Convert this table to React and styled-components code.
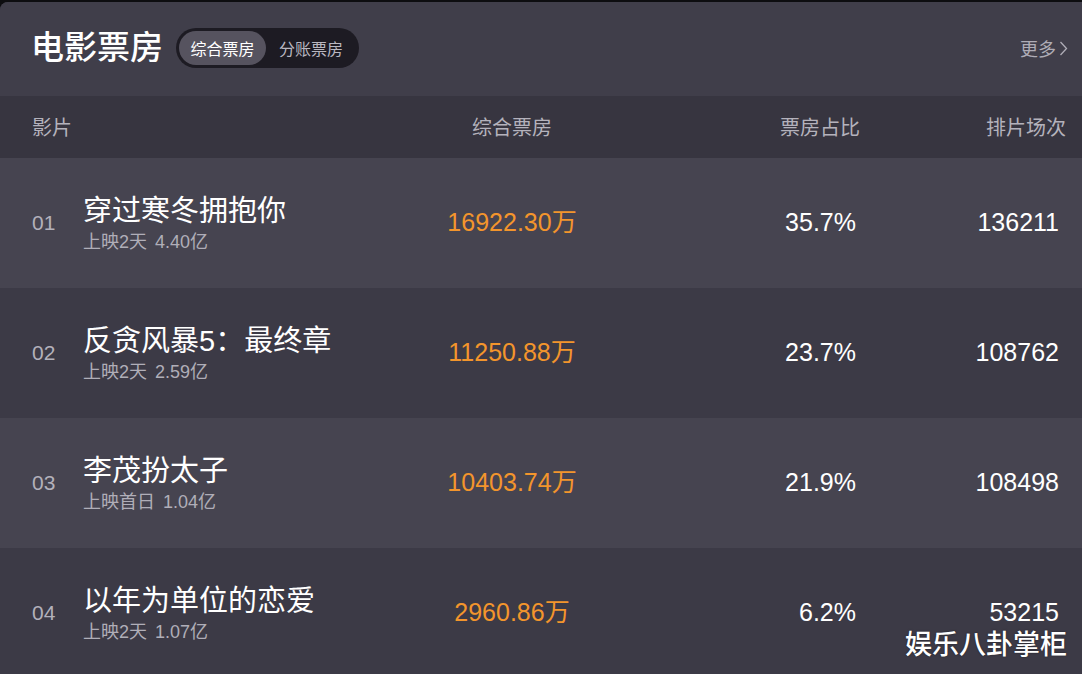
import React from "react";
import styled, { createGlobalStyle } from "styled-components";

const Global = createGlobalStyle`
  html, body { margin: 0; padding: 0; background: #0d0d10; }
  body { width: 1082px; height: 674px; overflow: hidden; font-family: "Liberation Sans", "Noto Sans CJK SC", sans-serif; }
`;

const Page = styled.div`
  position: relative;
  width: 1082px;
  height: 672px;
  margin-top: 2px;
  border-top-left-radius: 8px;
  overflow: hidden;
  background: #3c3a46;
`;

const TopBar = styled.div`
  height: 94px;
  display: flex;
  align-items: center;
  padding: 0 14px 0 31px;
  background: #403e4a;
`;

const Title = styled.h1`
  margin: 0 13px 2px 0;
  font-size: 33px;
  line-height: 40px;
  font-weight: 500;
  color: #fff;
`;

const Toggle = styled.div`
  display: flex;
  align-items: center;
  height: 40px;
  padding: 0 3px;
  border-radius: 20px;
  background: #1d1b23;
  margin-bottom: 2px;
`;

const ToggleItem = styled.div`
  width: ${(p) => (p.$active ? 87 : 90)}px;
  height: 34px;
  border-radius: 17px;
  display: flex;
  align-items: center;
  justify-content: center;
  font-size: 16px;
  color: ${(p) => (p.$active ? "#fff" : "#b9b7c0")};
  background: ${(p) => (p.$active ? "#56535f" : "transparent")};
`;

const More = styled.div`
  margin-left: auto;
  display: flex;
  align-items: center;
  gap: 3px;
  font-size: 18px;
  color: #aeacb6;
  margin-bottom: 2px;
`;

const Grid = styled.div`
  display: grid;
  grid-template-columns: ${(p) => p.$cols || "51px 329px 200px 244px 203px"};
  align-items: center;
  padding-left: 32px;
`;

const HeadRow = styled(Grid)`
  height: 62px;
  background: #373540;
  font-size: 20px;
  color: #b4b2bc;
`;

const HeadCell = styled.div`
  grid-column: ${(p) => p.$span || "auto"};
  text-align: ${(p) => p.$align || "left"};
  margin-top: -2px;
`;

const Row = styled(Grid)`
  height: 130px;
  background: ${(p) => (p.$alt ? "#3c3a46" : "#464450")};
`;

const Rank = styled.div`
  font-size: 21px;
  line-height: 26px;
  color: #b3b1bb;
`;

const FilmInfo = styled.div`
  display: flex;
  flex-direction: column;
  margin-top: 2px;
`;

const FilmName = styled.div`
  font-size: 29px;
  line-height: 32px;
  color: #fff;
`;

const FilmMeta = styled.div`
  margin-top: 4px;
  font-size: 18px;
  line-height: 22px;
  color: #b0aeb8;
  display: flex;
  gap: 8px;
`;

const Money = styled.div`
  text-align: center;
  font-size: 25px;
  line-height: 28px;
  color: #f3952c;
  margin-top: -2px;
`;

const Num = styled.div`
  text-align: right;
  font-size: 25px;
  line-height: 24px;
  color: #fff;
  margin-top: -2px;
`;

const Watermark = styled.div`
  position: absolute;
  right: 15px;
  bottom: 18px;
  font-family: "Noto Sans CJK SC", sans-serif;
  font-size: 27px;
  line-height: 26px;
  font-weight: 500;
  color: #fff;
  text-shadow: 0 0 2px rgba(0, 0, 0, 0.5);
`;

const films = [
  { rank: "01", name: "穿过寒冬拥抱你", days: "上映2天", total: "4.40亿", box: "16922.30万", pct: "35.7%", shows: "136211" },
  { rank: "02", name: "反贪风暴5：最终章", days: "上映2天", total: "2.59亿", box: "11250.88万", pct: "23.7%", shows: "108762" },
  { rank: "03", name: "李茂扮太子", days: "上映首日", total: "1.04亿", box: "10403.74万", pct: "21.9%", shows: "108498" },
  { rank: "04", name: "以年为单位的恋爱", days: "上映2天", total: "1.07亿", box: "2960.86万", pct: "6.2%", shows: "53215" },
];

export default function App() {
  return (
    <>
      <Global />
      <Page>
        <TopBar>
          <Title>电影票房</Title>
          <Toggle>
            <ToggleItem $active>综合票房</ToggleItem>
            <ToggleItem>分账票房</ToggleItem>
          </Toggle>
          <More>
            更多
            <svg width="9" height="15" viewBox="0 0 9 15">
              <polyline points="1.5,1 7.5,7.5 1.5,14" fill="none" stroke="#aeacb6" strokeWidth="1.3" />
            </svg>
          </More>
        </TopBar>
        <HeadRow $cols="51px 329px 200px 248px 206px">
          <HeadCell $span="1 / 3">影片</HeadCell>
          <HeadCell $align="center">综合票房</HeadCell>
          <HeadCell $align="right">票房占比</HeadCell>
          <HeadCell $align="right">排片场次</HeadCell>
        </HeadRow>
        {films.map((f, i) => (
          <Row key={f.rank} $alt={i % 2 === 1}>
            <Rank>{f.rank}</Rank>
            <FilmInfo>
              <FilmName>{f.name}</FilmName>
              <FilmMeta>
                <span>{f.days}</span>
                <span>{f.total}</span>
              </FilmMeta>
            </FilmInfo>
            <Money>{f.box}</Money>
            <Num>{f.pct}</Num>
            <Num>{f.shows}</Num>
          </Row>
        ))}
        <Watermark>娱乐八卦掌柜</Watermark>
      </Page>
    </>
  );
}
